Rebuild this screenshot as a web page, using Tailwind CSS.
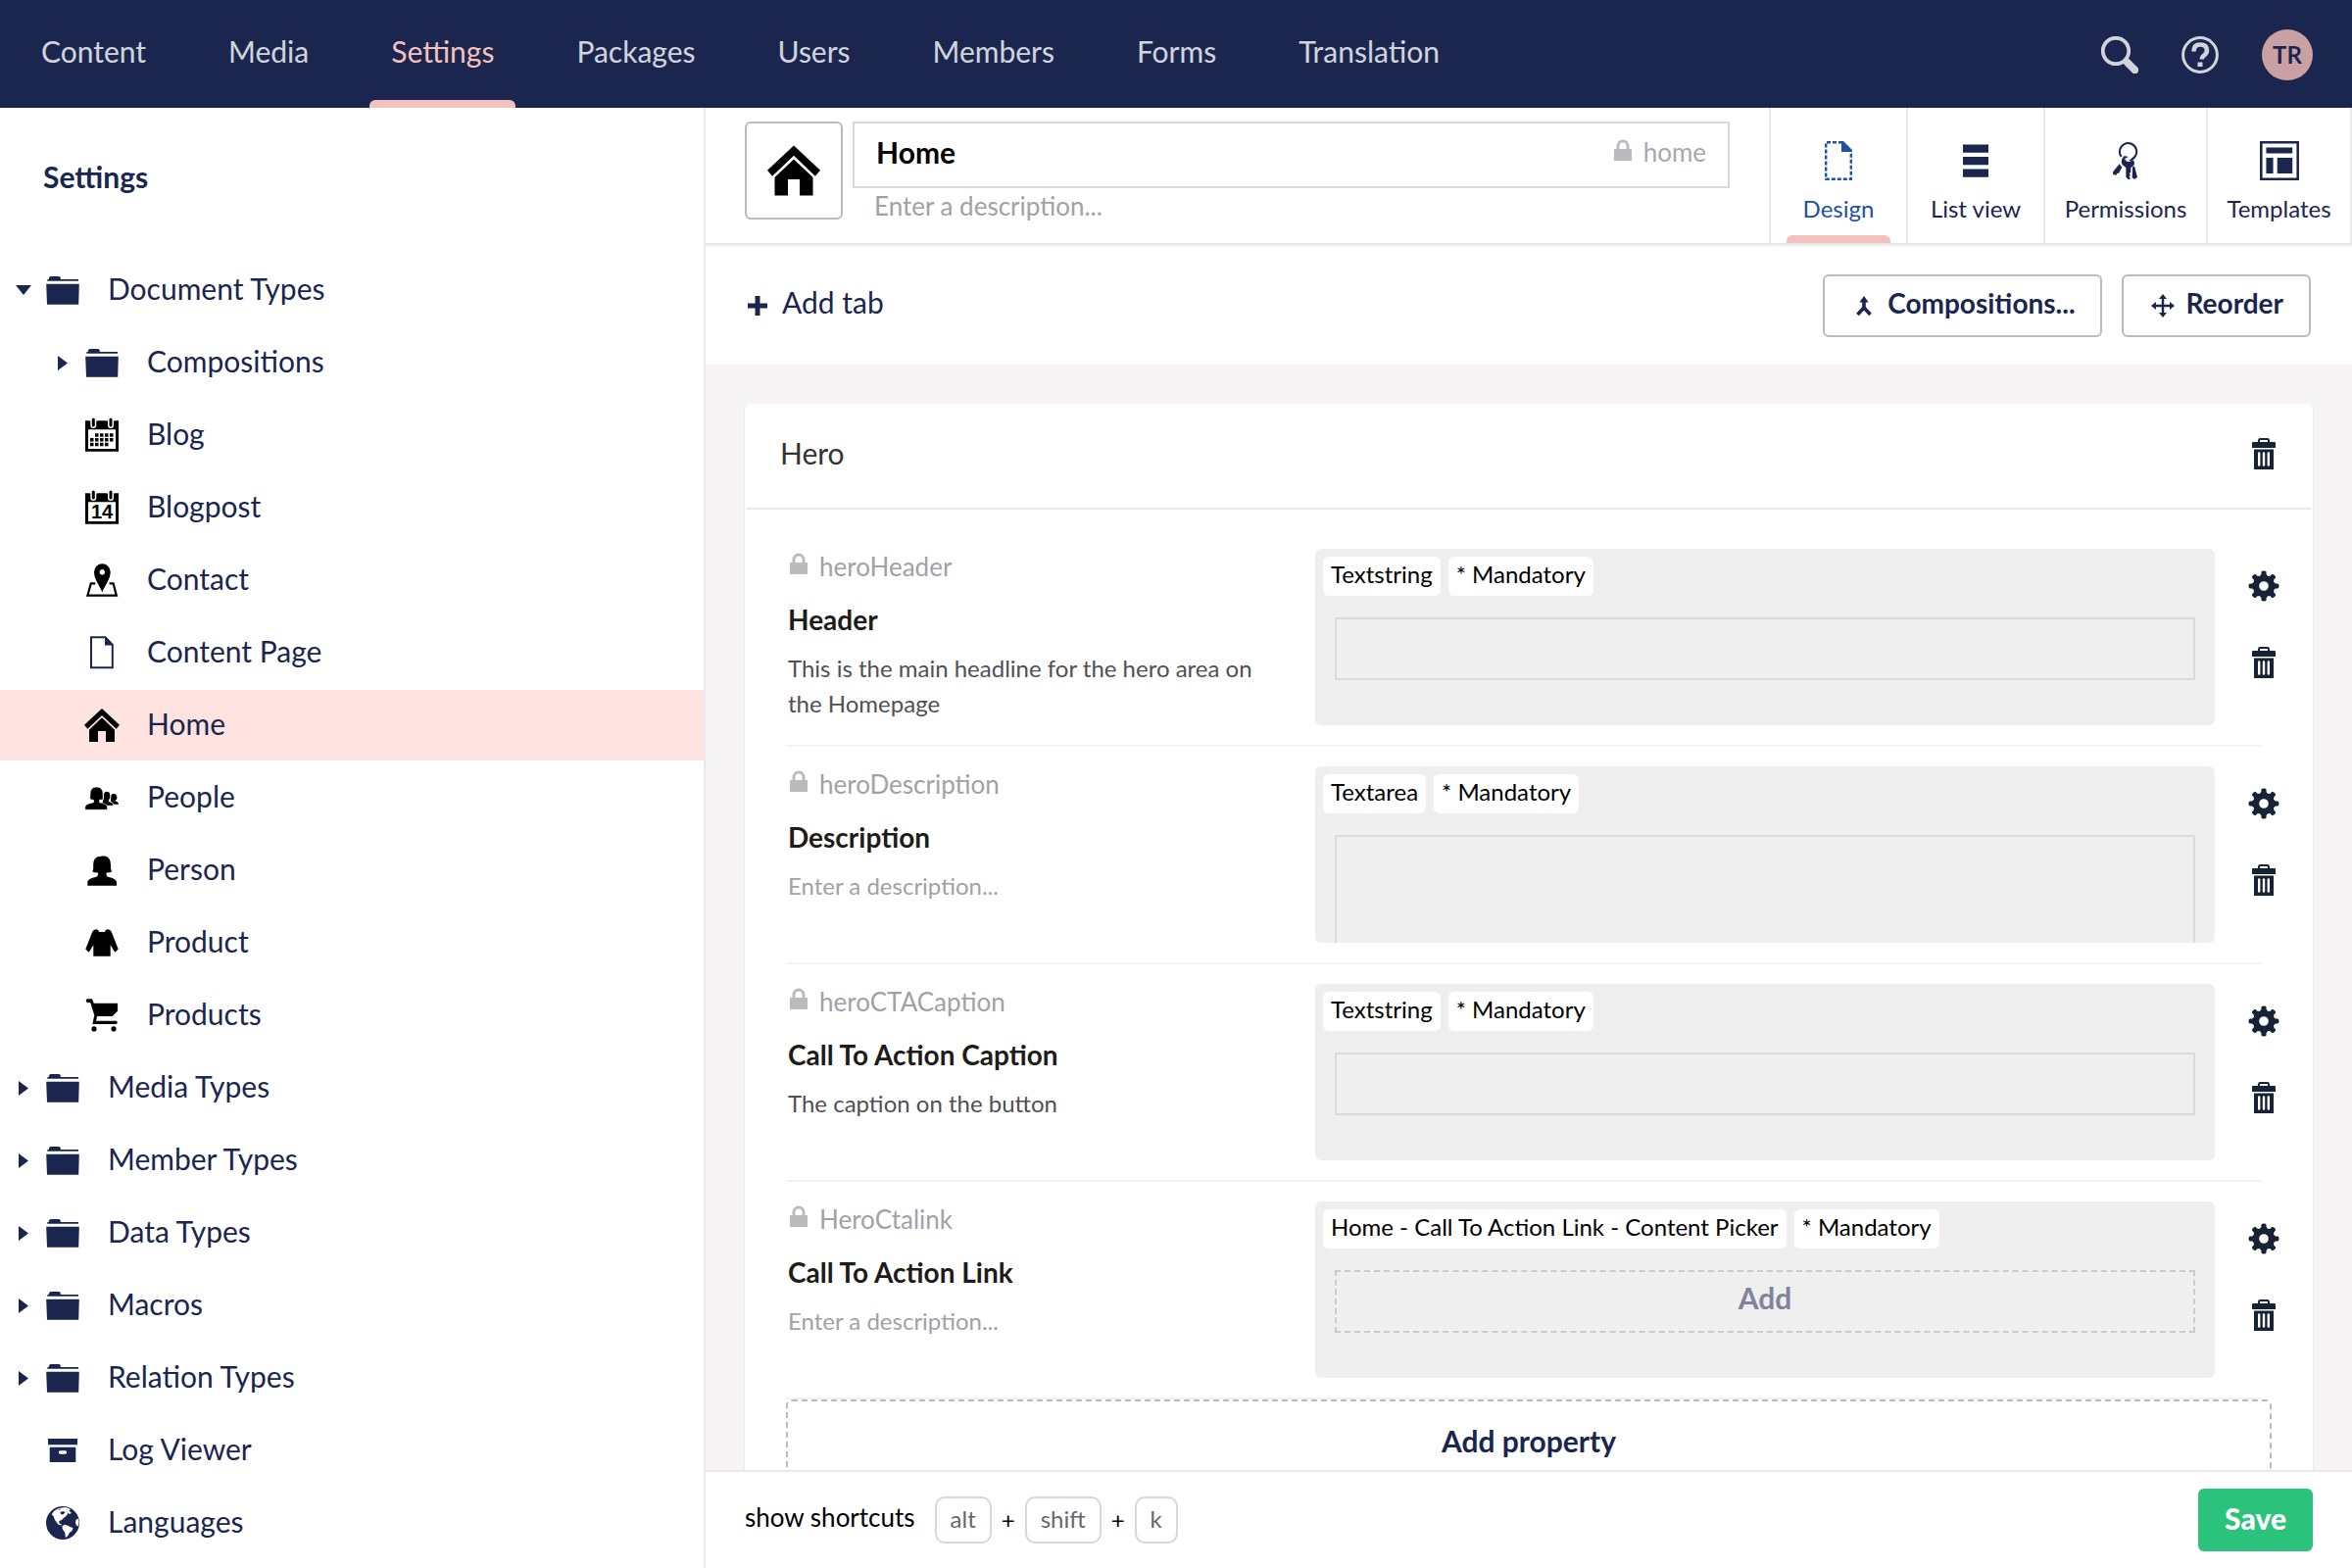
<!DOCTYPE html>
<html lang="en">
<head>
  <meta charset="UTF-8">
  <title>Home - Document Type</title>
  <script src="https://cdn.jsdelivr.net/npm/@tailwindcss/browser@4"></script>
</head>
<body class="h-screen flex flex-col overflow-hidden bg-white font-['Lato',sans-serif] text-[30px] leading-[36px] text-[#1b264f]">

  <!-- icon set -->
  <svg class="hidden">
    <symbol id="caret-down" viewBox="0 0 16 10"><path d="M0 0h16L8 10z"/></symbol>
    <symbol id="caret-right" viewBox="0 0 10 15"><path d="M0 0l10 7.5L0 15z"/></symbol>
    <symbol id="folder" viewBox="0 0 36 36">
      <path d="M2.3 8.7V7.2L4 6.8V5.5Q4.2 4 6 4h8q1.8 0 1.8 1.8V7H34v1.7zM1.2 11.7h33.6l-.6 21H2z"/>
    </symbol>
    <symbol id="calendar" viewBox="0 0 36 36">
      <path fill-rule="evenodd" d="M1 3.3h34v31.4H1zM4 12.3V32h28V12.3z"/>
      <path d="M9.3 2v6M27 2v6" stroke="#fff" stroke-width="6" stroke-linecap="round"/>
      <path d="M5 0h9v3.3H5zM22 0h9v3.3h-9z" fill="#fff"/>
      <path d="M9.3 2v6M27 2v6" stroke="currentColor" stroke-width="3" stroke-linecap="round"/>
    </symbol>
    <symbol id="house" viewBox="0 0 36 34">
      <path d="M18 0l18 16.8-3.4 4L18 6.9 3.4 20.8 0 16.8z"/>
      <path d="M18 9.3l13 12.4V34h-9V23h-8v11H5V21.7z"/>
    </symbol>
    <symbol id="lock" viewBox="0 0 18 22">
      <path fill-rule="evenodd" d="M2.5 10V7a6.5 6.5 0 0 1 13 0v3H18v12H0V10zM5.5 10h7V7a3.5 3.5 0 0 0-7 0z"/>
    </symbol>
    <symbol id="trash" viewBox="0 0 24 32">
      <path fill-rule="evenodd" d="M6 4V2.400Q6 0 8.400 0h7.200Q18 0 18 2.400V4h5q1 0 1 1v5H0V5q0-1 1-1zM8 4h8V2.600Q16 2 15.400 2H8.600Q8 2 8 2.600zM2 11.500h20V32H2zM6 15.500v12q0 1.200 1.200 1.200t1.200-1.200v-12q0-1.200-1.200-1.200T6 15.500zM10.800 15.500v12q0 1.200 1.200 1.200t1.200-1.200v-12q0-1.200-1.200-1.200t-1.200 1.200zM15.600 15.500v12q0 1.200 1.200 1.200t1.200-1.200v-12q0-1.200-1.200-1.200t-1.200 1.200z"/>
    </symbol>
    <symbol id="gear" viewBox="-16 -16 32 32">
      <g id="teeth">
        <path id="tooth" d="M-5-9L-2.600-12V-14.200Q-2.400-15.500 0-15.500T2.600-14.200V-12L5-9z"/>
        <use href="#tooth" transform="rotate(45)"/>
        <use href="#tooth" transform="rotate(90)"/>
        <use href="#tooth" transform="rotate(135)"/>
        <use href="#tooth" transform="rotate(180)"/>
        <use href="#tooth" transform="rotate(225)"/>
        <use href="#tooth" transform="rotate(270)"/>
        <use href="#tooth" transform="rotate(315)"/>
      </g>
      <circle r="7.800" fill="none" stroke="currentColor" stroke-width="6"/>
    </symbol>
  </svg>

  <!-- top bar -->
  <header class="h-[110px] shrink-0 bg-[#1b264f] flex justify-between pl-5 pr-10">
    <nav class="flex gap-10 text-white/80">
      <a href="#" class="flex items-center px-[22px] pb-1.5">Content</a>
      <a href="#" class="flex items-center px-[22px] pb-1.5">Media</a>
      <a href="#" class="relative flex items-center px-[22px] pb-1.5 text-[#f5c1bc]">Settings
        <span class="absolute left-0 right-0 bottom-0 h-2 rounded-t-md bg-[#f5c1bc]"></span>
      </a>
      <a href="#" class="flex items-center px-[22px] pb-1.5">Packages</a>
      <a href="#" class="flex items-center px-[22px] pb-1.5">Users</a>
      <a href="#" class="flex items-center px-[22px] pb-1.5">Members</a>
      <a href="#" class="flex items-center px-[22px] pb-1.5">Forms</a>
      <a href="#" class="flex items-center px-[22px] pb-1.5">Translation</a>
    </nav>
    <div class="flex items-center gap-11 pt-[2px] text-[#d2d4dc]">
      <button aria-label="Search">
        <svg class="w-[38px] h-[38px]" viewBox="0 0 38 38" fill="none" stroke="currentColor">
          <circle cx="15" cy="15" r="13.200" stroke-width="3.800"/>
          <path d="M24 24l3 3" stroke-width="4"/>
          <path d="M26.500 26.500l8 8" stroke-width="7.500" stroke-linecap="round"/>
        </svg>
      </button>
      <button aria-label="Help">
        <svg class="w-[38px] h-[38px]" viewBox="0 0 38 38">
          <circle cx="19" cy="19" r="17.400" fill="none" stroke="currentColor" stroke-width="3"/>
          <path d="M12.500 15.500q0-7 6.700-7t6.700 6q0 3-3 5.200-2.200 1.600-2.200 3.800" fill="none" stroke="currentColor" stroke-width="4.600"/>
          <path d="M16.500 26.500h5v4.500h-5z" fill="currentColor"/>
        </svg>
      </button>
      <button class="w-[52px] h-[52px] rounded-full bg-[#c9a1a5] text-[#1b264f] text-[24px] font-bold">TR</button>
    </div>
  </header>

  <div class="flex flex-1 min-h-0">

    <!-- tree -->
    <aside class="w-[30%] shrink-0 border-r-2 border-[#e9e9eb] overflow-hidden">
      <h2 class="h-[140px] flex items-center pl-11 font-bold">Settings</h2>
      <ul class="pt-[10px] [&_a]:pb-1 fill-current">
        <li class="h-[72px] mb-[2px] flex items-center pl-[14px]">
          <button class="w-5 flex justify-center" aria-label="Collapse"><svg class="w-4 h-[10px]"><use href="#caret-down"/></svg></button>
          <svg class="w-9 h-9 ml-3 mr-7"><use href="#folder"/></svg><a href="#">Document Types</a>
        </li>
        <li class="h-[72px] mb-[2px] flex items-center pl-[54px]">
          <button class="w-5 flex justify-center" aria-label="Expand"><svg class="w-[10px] h-[15px]"><use href="#caret-right"/></svg></button>
          <svg class="w-9 h-9 ml-3 mr-7"><use href="#folder"/></svg><a href="#">Compositions</a>
        </li>
        <li class="h-[72px] mb-[2px] flex items-center pl-[86px]">
          <svg class="w-9 h-9 mr-7 text-black" viewBox="0 0 36 36">
            <use href="#calendar"/>
            <path d="M11 16.300h3.500v3.500H11zM16 16.300h3.500v3.500H16zM21 16.300h3.500v3.500H21zM26 16.300h3.500v3.500H26zM6 21h3.500v3.500H6zM11 21h3.500v3.500H11zM16 21h3.500v3.500H16zM21 21h3.500v3.500H21zM26 21h3.500v3.500H26zM6 25.700h3.500v3.500H6zM11 25.700h3.500v3.500H11zM16 25.700h3.500v3.500H16zM21 25.700h3.500v3.500H21z"/>
          </svg><a href="#">Blog</a>
        </li>
        <li class="h-[72px] mb-[2px] flex items-center pl-[86px]">
          <svg class="w-9 h-9 mr-7 text-black" viewBox="0 0 36 36">
            <use href="#calendar"/>
            <text x="18" y="29" text-anchor="middle" class="font-['Liberation_Sans',sans-serif] font-bold text-[20px]">14</text>
          </svg><a href="#">Blogpost</a>
        </li>
        <li class="h-[72px] mb-[2px] flex items-center pl-[86px]">
          <svg class="w-9 h-9 mr-7 text-black" viewBox="0 0 36 36">
            <path fill-rule="evenodd" d="M18.300 30.200C16 24 10 17 10 9.700a8.300 8.300 0 0 1 16.700 0C26.700 17 20.600 24 18.300 30.200zM18.300 7a2.800 2.800 0 1 0 .01 0z"/>
            <path d="M11.300 21.300H6.800L3.400 33.700h29.400l-3.200-12.400h-4" fill="none" stroke="currentColor" stroke-width="2.200"/>
          </svg><a href="#">Contact</a>
        </li>
        <li class="h-[72px] mb-[2px] flex items-center pl-[86px]">
          <svg class="w-9 h-9 mr-7" viewBox="0 0 36 36">
            <path d="M7 2.300h14.500l7.300 7.500v23.400H7z" fill="none" stroke="currentColor" stroke-width="2"/>
            <path d="M21 1.500v9h8.500z"/>
          </svg><a href="#">Content Page</a>
        </li>
        <li class="h-[72px] mb-[2px] flex items-center pl-[86px] bg-[#fee3e0]">
          <svg class="w-9 h-[34px] mr-7 text-black"><use href="#house"/></svg><a href="#">Home</a>
        </li>
        <li class="h-[72px] mb-[2px] flex items-center pl-[86px]">
          <svg class="w-9 h-9 mr-7 text-black" viewBox="0 0 36 36">
            <path d="M27 19.500q-1-5.500 3-5.500t3.300 5.500q-.8.800-1.500.8v1.200q3.200.8 3.200 3.200h-8z"/>
            <path d="M19.500 18q-1-6.700 3.500-6.700T26.800 18q.2 1.500-1.500 2v1.700q4.700 1 4.700 4.600H17z" stroke="#fff" stroke-width="1"/>
            <path d="M6 19.500q-.5-1 0-4Q5.500 7 12.500 7q6.800 0 6.600 8-.2 3 .4 4.500-1.500.8-4 .8v2.500q8 1.500 8 4.700v2.800H.8v-2.800q0-3 8.700-4.700v-2.500q-2.200 0-3.500-.8z" stroke="#fff" stroke-width=".6"/>
          </svg><a href="#">People</a>
        </li>
        <li class="h-[72px] mb-[2px] flex items-center pl-[86px]">
          <svg class="w-9 h-9 mr-7 text-black" viewBox="0 0 36 36">
            <path d="M8.300 19.500q1.200-2 .9-7Q9.300 3.800 16 4q1.500-1 5-.4 5.800 1 6 9-.2 5 1.200 7-1.700 1-5.700 1-.6 3 1.500 4.200 9 2 9 5.200v3.700H3.300V30q0-3.200 9.200-5.200 2-1.200 1.500-4.200-4 0-5.700-1.100z"/>
          </svg><a href="#">Person</a>
        </li>
        <li class="h-[72px] mb-[2px] flex items-center pl-[86px]">
          <svg class="w-9 h-9 mr-7 text-black" viewBox="0 0 36 36">
            <path d="M12.500 4.300q2.200 0 2.500 2.700h6q.3-2.700 2.500-2.700 3.500 0 4.800 4l6.400 16.200-3.400 3.300-4.600-7.500v11.400H9.300V20.300l-4.600 7.500-3.400-3.300L7.700 8.300q1.300-4 4.800-4z"/>
          </svg><a href="#">Product</a>
        </li>
        <li class="h-[72px] mb-[2px] flex items-center pl-[86px]">
          <svg class="w-9 h-9 mr-7 text-black" viewBox="0 0 36 36">
            <path d="M3.500 1.300H8l1.700 4.400H34v8L28.500 19H13.200L12 23.700h20.500a1.700 1.700 0 0 1 0 3.300H8.300l2-9L6.200 4.900H3.500a1.800 1.800 0 0 1 0-3.600z"/>
            <circle cx="10" cy="31.900" r="2.600"/><circle cx="30" cy="31.900" r="2.600"/>
          </svg><a href="#">Products</a>
        </li>
        <li class="h-[72px] mb-[2px] flex items-center pl-[14px]">
          <button class="w-5 flex justify-center" aria-label="Expand"><svg class="w-[10px] h-[15px]"><use href="#caret-right"/></svg></button>
          <svg class="w-9 h-9 ml-3 mr-7"><use href="#folder"/></svg><a href="#">Media Types</a>
        </li>
        <li class="h-[72px] mb-[2px] flex items-center pl-[14px]">
          <button class="w-5 flex justify-center" aria-label="Expand"><svg class="w-[10px] h-[15px]"><use href="#caret-right"/></svg></button>
          <svg class="w-9 h-9 ml-3 mr-7"><use href="#folder"/></svg><a href="#">Member Types</a>
        </li>
        <li class="h-[72px] mb-[2px] flex items-center pl-[14px]">
          <button class="w-5 flex justify-center" aria-label="Expand"><svg class="w-[10px] h-[15px]"><use href="#caret-right"/></svg></button>
          <svg class="w-9 h-9 ml-3 mr-7"><use href="#folder"/></svg><a href="#">Data Types</a>
        </li>
        <li class="h-[72px] mb-[2px] flex items-center pl-[14px]">
          <button class="w-5 flex justify-center" aria-label="Expand"><svg class="w-[10px] h-[15px]"><use href="#caret-right"/></svg></button>
          <svg class="w-9 h-9 ml-3 mr-7"><use href="#folder"/></svg><a href="#">Macros</a>
        </li>
        <li class="h-[72px] mb-[2px] flex items-center pl-[14px]">
          <button class="w-5 flex justify-center" aria-label="Expand"><svg class="w-[10px] h-[15px]"><use href="#caret-right"/></svg></button>
          <svg class="w-9 h-9 ml-3 mr-7"><use href="#folder"/></svg><a href="#">Relation Types</a>
        </li>
        <li class="h-[72px] mb-[2px] flex items-center pl-[46px]">
          <svg class="w-9 h-9 mr-7" viewBox="0 0 36 36">
            <path fill-rule="evenodd" d="M3 6h30v6.300H3zM4.700 14.700h26.600V30H4.700zM15.500 18.300a1.700 1.700 0 0 0 0 3.400h5a1.700 1.700 0 0 0 0-3.400z"/>
          </svg><a href="#">Log Viewer</a>
        </li>
        <li class="h-[72px] mb-[2px] flex items-center pl-[46px]">
          <svg class="w-9 h-9 mr-7" viewBox="0 0 36 36">
            <circle cx="18" cy="18" r="17"/>
            <path fill="#fff" d="M6.700 9.300L9.500 5.500 14 3l7-1 5 2-1.500 1.500L27 8l-2.500 1-1-1.500-1.500 3-3 2.500-2 2-2.700 1v2.500l2 .5.5 1.500-3.500-1-3.300-4.500-1.500-4zM17.500 21l3-1.300 3 1.300 5 2.300-1 3-2.500 1.500-2 3.700-2.200 1.500-.5-5-2.600-4zM31.500 14.700l2.300-1 .7 3-.5 4.500-2-.5-1-3z"/>
            <path d="M15.500 7l3-1 2 1.500-2.500 2-2-.5zM13 4l3-.5-1 1.200z"/>
          </svg><a href="#">Languages</a>
        </li>
      </ul>
    </aside>

    <!-- editor -->
    <main class="flex-1 min-w-0 flex flex-col">
      <div class="h-[142px] shrink-0 flex border-b-2 border-[#f4f4f5]">
      <div class="flex-1 flex border-b-2 border-[#e9e9eb]">
        <div class="flex-1 flex pt-[14px] pl-10 pr-10">
          <button class="w-[100px] h-[100px] mr-[10px] border-2 border-[#bbbabf] rounded-md flex items-center justify-center text-black" aria-label="Change icon">
            <svg class="w-[54px] h-[52px]"><use href="#house" fill="currentColor"/></svg>
          </button>
          <div class="flex-1">
            <div class="h-[68px] flex items-center border-2 border-[#d8d7d9] px-[22px] pb-1.5">
              <input type="text" aria-label="Name" value="Home" class="flex-1 min-w-0 font-bold text-black outline-none">
              <svg class="w-[18px] h-[22px] mr-3 mb-1 fill-[#bbbabf]"><use href="#lock"/></svg>
              <span class="text-[26px] text-[#a9a8ad]">home</span>
            </div>
            <input type="text" aria-label="Description" placeholder="Enter a description..." class="block w-full h-9 pl-[22px] text-[26px] outline-none placeholder:text-[#a2a1a6]">
          </div>
        </div>
        <div class="flex text-[24px] leading-[30px] fill-current">
          <button class="relative w-[140px] flex flex-col items-center pt-[34px] border-l-2 border-[#e9e9eb] text-[#2152a3]">
            <svg class="w-7 h-10 mb-[14px]" viewBox="0 0 28 40">
              <path d="M18 1.200H1.200v37.600h25.600V10" fill="none" stroke="currentColor" stroke-width="2.400" stroke-dasharray="4 2"/>
              <path d="M17 0h2l9 9v2H17z"/>
            </svg>
            Design
            <span class="absolute inset-x-4 bottom-0 h-2 rounded-t-md bg-[#f5c1bc]"></span>
          </button>
          <button class="w-[140px] flex flex-col items-center pt-[34px] border-l-2 border-[#e9e9eb]">
            <svg class="w-[26px] h-10 mb-[14px]" viewBox="0 0 26 40"><path d="M0 3.500h26v8.300H0zM0 16h26v8.300H0zM0 28.400h26v8.300H0z"/></svg>
            List view
          </button>
          <button class="w-[166px] flex flex-col items-center pt-[34px] border-l-2 border-[#e9e9eb]">
            <svg class="w-[26px] h-10 mb-[14px]" viewBox="0 0 78 120">
              <path d="M26 48a26 26 0 1 1 24 10" fill="none" stroke="currentColor" stroke-width="6"/>
              <path d="M34 46q-8 8-8 18 0 8 9 13l5 4v29l8 8 6-3-4-7 4-4-4-5 5-4V81q12-7 11-16-2-6-6-8-6 9-17 5l-6-6q2-5 9-7l6 3q-9-8-18-6z"/>
              <path d="M20 70l8 10-10 18-6 1-2 6-10-4 1-8zM60 80l6-4 9 34-4 4-7 2-5-5z"/>
              <path d="M37 54q4 6 13 3l8-6" fill="none" stroke="#fff" stroke-width="3"/>
            </svg>
            Permissions
          </button>
          <button class="w-[149px] flex flex-col items-center pt-[34px] border-x-2 border-[#e9e9eb]">
            <svg class="w-10 h-10 mb-[14px]" viewBox="0 0 124 124">
              <path fill-rule="evenodd" d="M0 0h124v124H0zM8 8v108h108V8z"/>
              <path d="M20 20h83v19H20zM20 53h22v49H20zM55 53h48v49H55z"/>
            </svg>
            Templates
          </button>
        </div>
      </div>
      </div>

      <div class="h-[120px] shrink-0 flex items-center justify-between pl-[43px] pr-[42px]">
        <button class="flex items-center gap-[15px]">
          <svg class="w-5 h-5" viewBox="0 0 20 20"><path d="M7.500 0h5v7.500H20v5h-7.500V20h-5v-7.500H0v-5h7.500z" fill="currentColor"/></svg>
          <span class="pb-2">Add tab</span>
        </button>
        <div class="flex gap-5 text-[28px] font-bold">
          <button class="h-16 flex items-center gap-3 pl-7 pr-[25px] border-2 border-[#bbbabf] rounded-md">
            <svg class="w-6 h-6" viewBox="0 0 24 24">
              <path d="M12 2l4.700 6.500H7.300z" fill="currentColor"/>
              <path d="M12 7v7.500M5.500 21l6.500-7 6.500 7" fill="none" stroke="currentColor" stroke-width="3.600"/>
            </svg>
            <span class="pb-1.5">Compositions...</span>
          </button>
          <button class="h-16 flex items-center gap-3 pl-7 pr-[26px] border-2 border-[#bbbabf] rounded-md">
            <svg class="w-6 h-6" viewBox="0 0 24 24">
              <path d="M12 3v18M3 12h18" stroke="currentColor" stroke-width="2.400"/>
              <path d="M12 0l4 5H8zM12 24l4-5H8zM0 12l5-4v8zM24 12l-5-4v8z" fill="currentColor"/>
            </svg>
            <span class="pb-1.5">Reorder</span>
          </button>
        </div>
      </div>

      <div class="flex-1 min-h-0 overflow-hidden bg-[#f6f4f5] p-10">
        <section class="bg-white rounded-md shadow-[0_2px_2px_rgba(0,0,0,0.12)]">
          <div class="h-[108px] mx-[2px] pl-[34px] pr-9 flex items-center justify-between border-b-2 border-[#e9e9eb]">
            <h3 class="text-[#333333] pb-1.5">Hero</h3>
            <button aria-label="Delete group"><svg class="w-6 h-8 mb-1 fill-[#162335]"><use href="#trash"/></svg></button>
          </div>
          <div class="pt-5 px-[42px] pb-10">

            <div class="mr-[10px] py-5 flex border-b-2 border-[#f3f3f5]">
              <div class="w-[540px] pl-[2px] pr-10">
                <div class="flex items-start text-[26px] text-[#a2a1a6]">
                  <svg class="w-[18px] h-[22px] mt-1 ml-[2px] mr-3 fill-[#bbbabf]"><use href="#lock"/></svg>heroHeader
                </div>
                <input type="text" aria-label="Property name" value="Header" class="block w-full h-10 mt-4 text-[28px] font-bold text-[#1e1c1a] outline-none">
                <textarea rows="2" aria-label="Property description" placeholder="Enter a description..." class="block w-full mt-3 text-[24px] leading-[36px] text-[#515054] resize-none outline-none overflow-hidden">This is the main headline for the hero area on the Homepage</textarea>
              </div>
              <div class="flex-1 h-[180px] p-2 rounded-md bg-[#efefef] overflow-hidden">
                <div class="flex gap-2 text-[24px] text-black">
                  <span class="h-10 px-2 rounded-md bg-white">Textstring</span>
                  <span class="h-10 px-2 rounded-md bg-white">* Mandatory</span>
                </div>
                <div class="mt-[22px] mx-3 h-16 border-2 border-[#dadada]"></div>
              </div>
              <div class="w-[100px] -mr-[52px] pt-[22px] flex flex-col items-center gap-[46px] fill-[#162335] text-[#162335]">
                <button aria-label="Settings"><svg class="w-8 h-8"><use href="#gear"/></svg></button>
                <button aria-label="Delete"><svg class="w-6 h-8"><use href="#trash"/></svg></button>
              </div>
            </div>

            <div class="mr-[10px] py-5 flex border-b-2 border-[#f3f3f5]">
              <div class="w-[540px] pl-[2px] pr-10">
                <div class="flex items-start text-[26px] text-[#a2a1a6]">
                  <svg class="w-[18px] h-[22px] mt-1 ml-[2px] mr-3 fill-[#bbbabf]"><use href="#lock"/></svg>heroDescription
                </div>
                <input type="text" aria-label="Property name" value="Description" class="block w-full h-10 mt-4 text-[28px] font-bold text-[#1e1c1a] outline-none">
                <textarea rows="2" aria-label="Property description" placeholder="Enter a description..." class="block w-full mt-3 text-[24px] leading-[36px] text-[#515054] resize-none outline-none overflow-hidden placeholder:text-[#a2a1a6]"></textarea>
              </div>
              <div class="flex-1 h-[180px] p-2 rounded-md bg-[#efefef] overflow-hidden">
                <div class="flex gap-2 text-[24px] text-black">
                  <span class="h-10 px-2 rounded-md bg-white">Textarea</span>
                  <span class="h-10 px-2 rounded-md bg-white">* Mandatory</span>
                </div>
                <div class="mt-[22px] mx-3 h-48 border-2 border-[#dadada]"></div>
              </div>
              <div class="w-[100px] -mr-[52px] pt-[22px] flex flex-col items-center gap-[46px] fill-[#162335] text-[#162335]">
                <button aria-label="Settings"><svg class="w-8 h-8"><use href="#gear"/></svg></button>
                <button aria-label="Delete"><svg class="w-6 h-8"><use href="#trash"/></svg></button>
              </div>
            </div>

            <div class="mr-[10px] py-5 flex border-b-2 border-[#f3f3f5]">
              <div class="w-[540px] pl-[2px] pr-10">
                <div class="flex items-start text-[26px] text-[#a2a1a6]">
                  <svg class="w-[18px] h-[22px] mt-1 ml-[2px] mr-3 fill-[#bbbabf]"><use href="#lock"/></svg>heroCTACaption
                </div>
                <input type="text" aria-label="Property name" value="Call To Action Caption" class="block w-full h-10 mt-4 text-[28px] font-bold text-[#1e1c1a] outline-none">
                <textarea rows="2" aria-label="Property description" placeholder="Enter a description..." class="block w-full mt-3 text-[24px] leading-[36px] text-[#515054] resize-none outline-none overflow-hidden">The caption on the button</textarea>
              </div>
              <div class="flex-1 h-[180px] p-2 rounded-md bg-[#efefef] overflow-hidden">
                <div class="flex gap-2 text-[24px] text-black">
                  <span class="h-10 px-2 rounded-md bg-white">Textstring</span>
                  <span class="h-10 px-2 rounded-md bg-white">* Mandatory</span>
                </div>
                <div class="mt-[22px] mx-3 h-16 border-2 border-[#dadada]"></div>
              </div>
              <div class="w-[100px] -mr-[52px] pt-[22px] flex flex-col items-center gap-[46px] fill-[#162335] text-[#162335]">
                <button aria-label="Settings"><svg class="w-8 h-8"><use href="#gear"/></svg></button>
                <button aria-label="Delete"><svg class="w-6 h-8"><use href="#trash"/></svg></button>
              </div>
            </div>

            <div class="mr-[10px] py-5 flex border-b-2 border-[#f3f3f5]">
              <div class="w-[540px] pl-[2px] pr-10">
                <div class="flex items-start text-[26px] text-[#a2a1a6]">
                  <svg class="w-[18px] h-[22px] mt-1 ml-[2px] mr-3 fill-[#bbbabf]"><use href="#lock"/></svg>HeroCtalink
                </div>
                <input type="text" aria-label="Property name" value="Call To Action Link" class="block w-full h-10 mt-4 text-[28px] font-bold text-[#1e1c1a] outline-none">
                <textarea rows="2" aria-label="Property description" placeholder="Enter a description..." class="block w-full mt-3 text-[24px] leading-[36px] text-[#515054] resize-none outline-none overflow-hidden placeholder:text-[#a2a1a6]"></textarea>
              </div>
              <div class="flex-1 h-[180px] p-2 rounded-md bg-[#efefef] overflow-hidden flex flex-col">
                <div class="flex gap-2 text-[24px] text-black">
                  <span class="h-10 px-2 rounded-md bg-white">Home - Call To Action Link - Content Picker</span>
                  <span class="h-10 px-2 rounded-md bg-white">* Mandatory</span>
                </div>
                <button class="mt-[22px] mx-3 h-16 pb-2 border-2 border-dashed border-[#cccccc] font-bold text-[#80859c]">Add</button>
              </div>
              <div class="w-[100px] -mr-[52px] pt-[22px] flex flex-col items-center gap-[46px] fill-[#162335] text-[#162335]">
                <button aria-label="Settings"><svg class="w-8 h-8"><use href="#gear"/></svg></button>
                <button aria-label="Delete"><svg class="w-6 h-8"><use href="#trash"/></svg></button>
              </div>
            </div>

            <button class="block w-full h-[88px] pb-1 border-2 border-dashed border-[#bbbabf] rounded-md font-bold">Add property</button>
          </div>
        </section>
      </div>

      <!-- footer -->
      <footer class="h-[100px] shrink-0 flex items-center justify-between px-10 border-t-2 border-[#e9e9eb] bg-white">
        <div class="flex items-center text-[24px] text-black">
          <button class="text-[26px] mr-5 pb-1.5">show shortcuts</button>
          <kbd class="h-12 px-[14px] border-2 border-[#d8d7d9] rounded-[10px] font-['Lato',sans-serif] leading-[42px] text-[#68676b]">alt</kbd>
          <span class="mx-[10px]">+</span>
          <kbd class="h-12 px-[14px] border-2 border-[#d8d7d9] rounded-[10px] font-['Lato',sans-serif] leading-[42px] text-[#68676b]">shift</kbd>
          <span class="mx-[10px]">+</span>
          <kbd class="h-12 px-[14px] border-2 border-[#d8d7d9] rounded-[10px] font-['Lato',sans-serif] leading-[42px] text-[#68676b]">k</kbd>
        </div>
        <button class="h-16 px-[27px] pb-1 rounded-md bg-[#2bc37c] text-white text-[30px] font-black">Save</button>
      </footer>
    </main>
  </div>
</body>
</html>
